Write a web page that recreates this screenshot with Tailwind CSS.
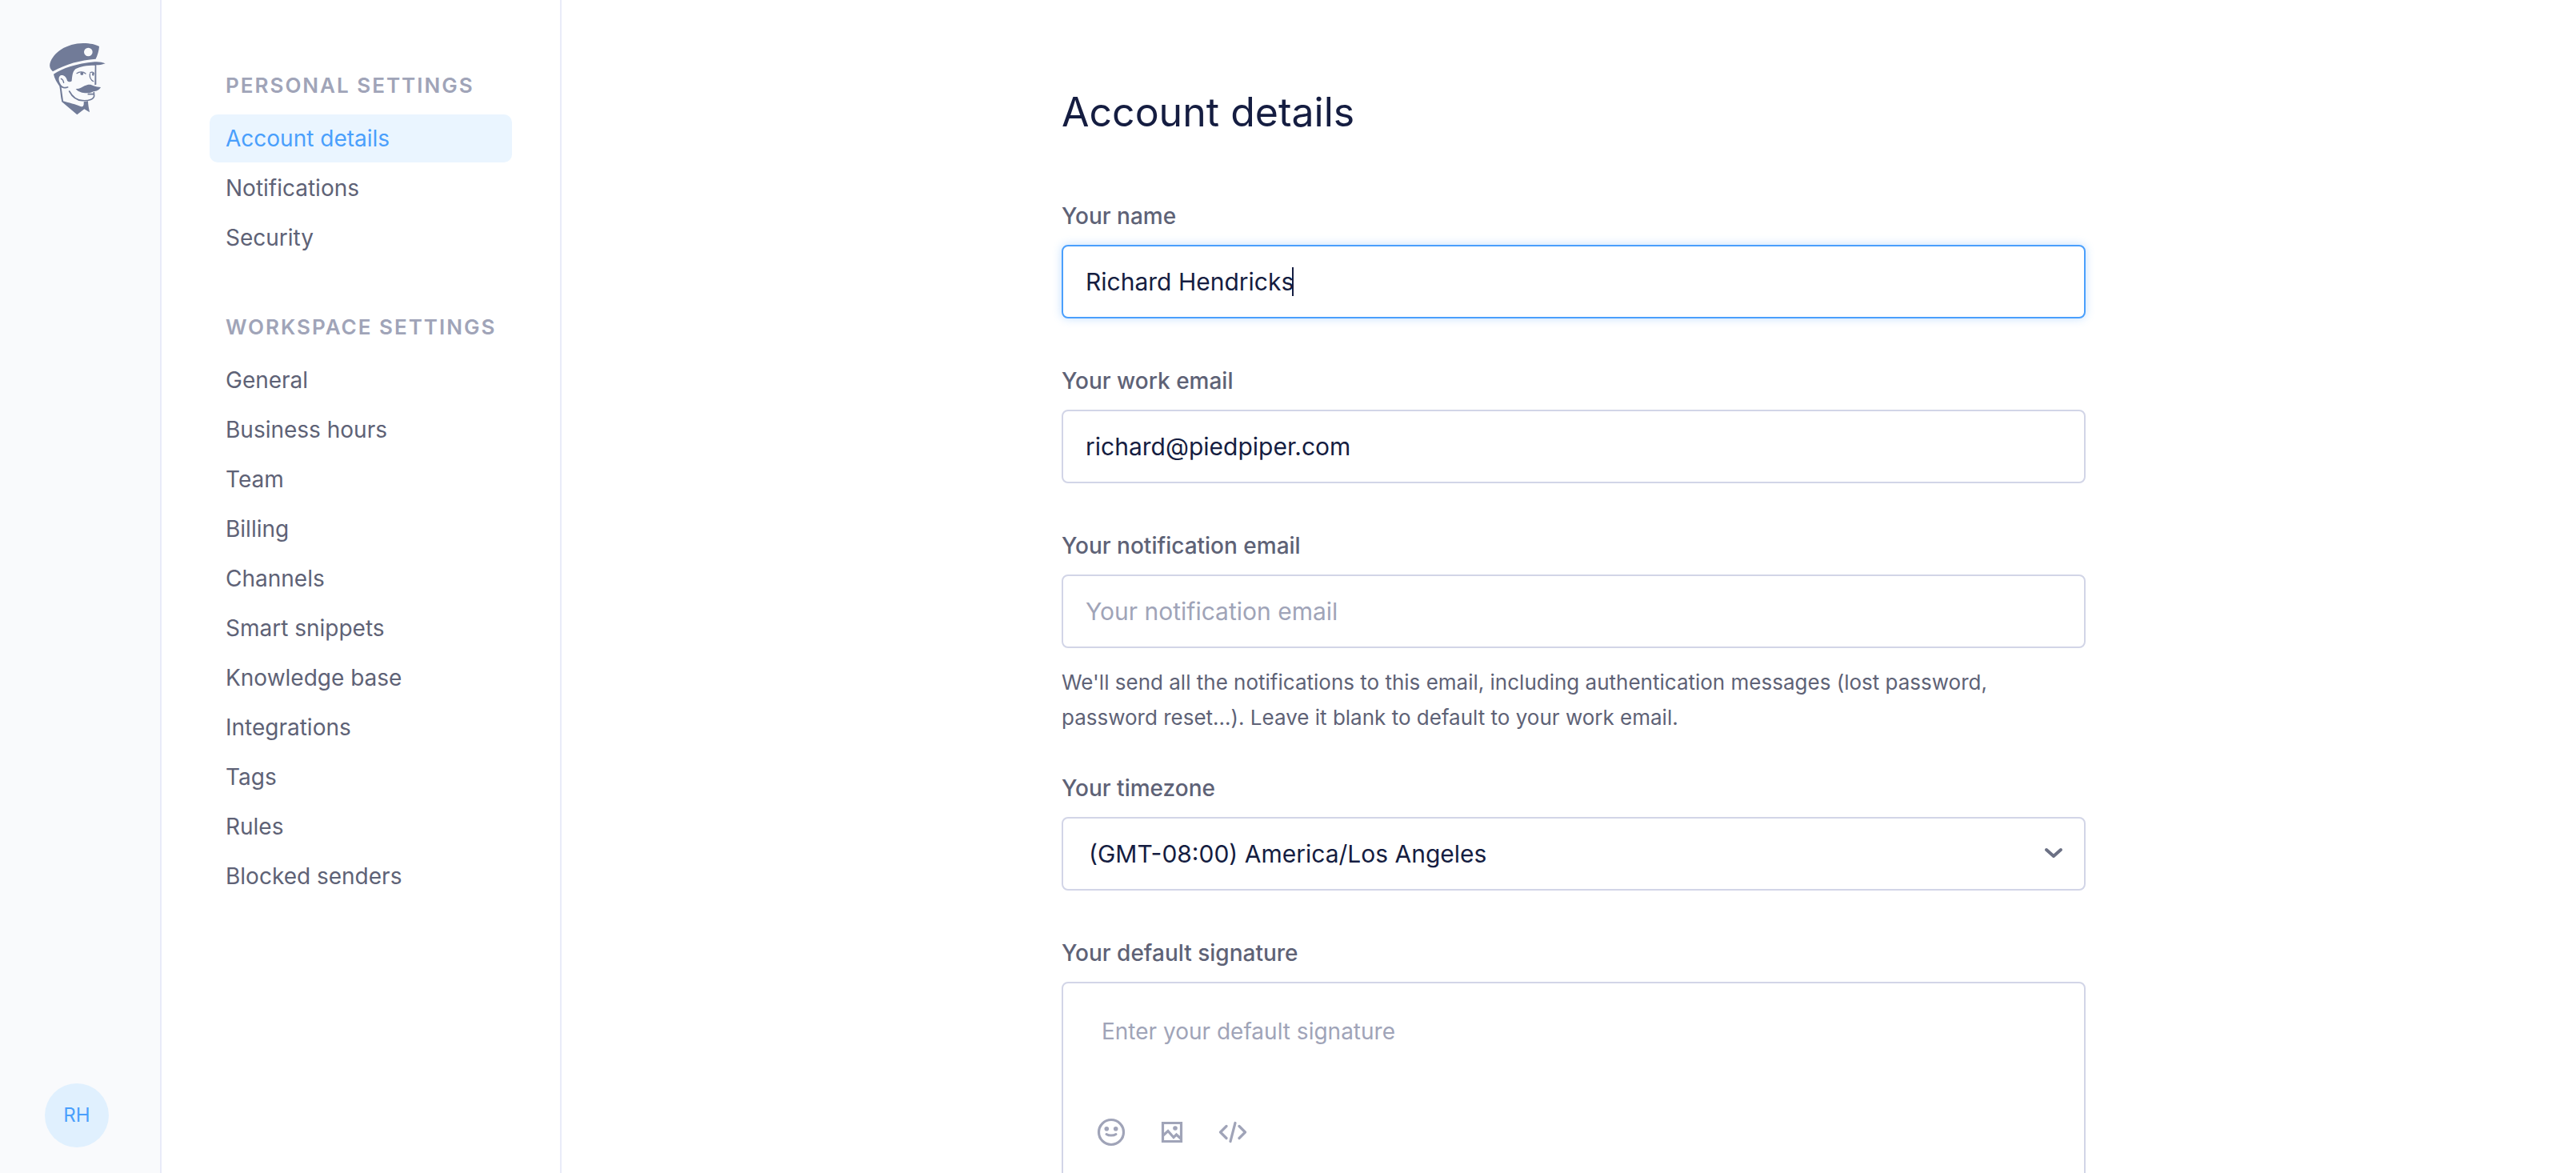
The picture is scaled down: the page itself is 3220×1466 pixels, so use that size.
<!DOCTYPE html>
<html lang="en">
<head>
<meta charset="utf-8">
<meta name="viewport" content="width=device-width, initial-scale=1">
<title>Account details</title>
<script src="https://cdn.jsdelivr.net/npm/@tailwindcss/browser@4"></script>
</head>
<body class="flex h-screen overflow-hidden bg-white font-[Inter,sans-serif] text-[28px] leading-10 text-[#5e6276]">

<aside class="flex w-[202px] shrink-0 flex-col items-center justify-between border-r-2 border-[#e9ebf8] bg-[#f9fafc] pt-[54px] pr-2 pb-8">
  <a href="#" aria-label="Home">
    <svg class="h-[90px] w-[72px]" viewBox="60 42 216 270" fill="#717b98">
      <!-- beret -->
      <path fill-rule="evenodd" d="M78 148C68 139 65 129 67 119C80 75 130 43 192 42C218 42 240 47 252 54C251 70 246 87 239 101C180 106 128 119 78 148ZM195 75a16 16 0 1 0 32 0a16 16 0 1 0-32 0Z"/>
      <!-- brim, hair and sideburn -->
      <path d="M81 158C115 136 165 119 235 112C250 111 264 113 275 118C262 123 252 124 241 124L241 197L235 199L236 125C205 125 180 129 163 139C151 150 151 167 149 184C144 189 136 187 132 182C128 168 119 160 107 163C97 169 100 185 108 197C115 207 124 208 135 204L137 208C128 213 119 213 110 208L117 258L112 262C107 242 107 223 103 203C94 189 84 175 81 158Z"/>
      <!-- collar -->
      <path d="M112 257C138 266 165 270 184 280C193 281 195 275 194 262L210 259C210 272 213 285 216 301L196 289L169 310L112 262Z"/>
      <!-- ear, eyes, nose, jaw and mouth -->
      <g fill="none" stroke="#717b98" stroke-linecap="round" stroke-linejoin="round">
        <path stroke-width="4" d="M109 175C117 178 118 184 119 190"/>
        <path stroke-width="4" d="M168 155C177 148 192 148 201 156M218 153C223 149 229 149 232 155M217 158C216 170 222 181 230 185"/>
        <path stroke-width="5" d="M140 222C150 241 163 256 189 257C214 259 232 251 233 240L232 226M211 233H229"/>
      </g>
      <circle cx="187" cy="156" r="6"/>
      <ellipse cx="229" cy="158" rx="4" ry="6"/>
      <!-- moustache -->
      <path d="M164 213C178 214 187 208 197 202C210 195 222 196 231 202C240 206 249 207 258 207C252 218 242 222 231 222C218 233 178 232 164 213Z"/>
    </svg>
  </a>
  <button type="button" class="size-20 rounded-full bg-[#e0f0fe] text-2xl text-[#4a9ffc]">RH</button>
</aside>

<nav class="flex w-[500px] shrink-0 flex-col gap-[62px] border-r-2 border-[#e9ebf8] px-[60px] pt-[87px]" aria-label="Settings">
  <section>
    <h2 class="mb-4 pl-5 text-[26px] font-semibold tracking-[2px] whitespace-nowrap text-[#a0a4b8]">PERSONAL SETTINGS</h2>
    <ul class="flex flex-col gap-0.5">
      <li><a href="#" aria-current="page" class="block rounded-[10px] bg-[#eaf5ff] px-5 py-2.5 text-[#4a9ffc]">Account details</a></li>
      <li><a href="#" class="block px-5 py-2.5">Notifications</a></li>
      <li><a href="#" class="block px-5 py-2.5">Security</a></li>
    </ul>
  </section>
  <section>
    <h2 class="mb-4 pl-5 text-[26px] font-semibold tracking-[2px] whitespace-nowrap text-[#a0a4b8]">WORKSPACE SETTINGS</h2>
    <ul class="flex flex-col gap-0.5">
      <li><a href="#" class="block px-5 py-2.5">General</a></li>
      <li><a href="#" class="block px-5 py-2.5">Business hours</a></li>
      <li><a href="#" class="block px-5 py-2.5">Team</a></li>
      <li><a href="#" class="block px-5 py-2.5">Billing</a></li>
      <li><a href="#" class="block px-5 py-2.5">Channels</a></li>
      <li><a href="#" class="block px-5 py-2.5">Smart snippets</a></li>
      <li><a href="#" class="block px-5 py-2.5">Knowledge base</a></li>
      <li><a href="#" class="block px-5 py-2.5">Integrations</a></li>
      <li><a href="#" class="block px-5 py-2.5">Tags</a></li>
      <li><a href="#" class="block px-5 py-2.5">Rules</a></li>
      <li><a href="#" class="block px-5 py-2.5">Blocked senders</a></li>
    </ul>
  </section>
</nav>

<main class="min-w-0 flex-1 overflow-hidden pt-[108px] pl-3">
  <form class="mx-auto max-w-[1280px]">
    <h1 class="mb-[78px] text-[50px] leading-16 text-[#151d41]">Account details</h1>

    <div class="mb-[58px]">
      <label for="name" class="mb-4 block font-medium">Your name</label>
      <div class="relative">
        <input id="name" type="text" value="Richard Hendricks" class="block h-[92px] w-full rounded-lg border-2 border-[#4a9ffc] bg-white px-7 text-[30px] text-[#151d41] shadow-[0_0_12px_#4a9ffc55] outline-none">
        <span class="absolute top-7 left-[288px] h-9 w-0.5 bg-[#151d41]"></span>
      </div>
    </div>

    <div class="mb-[58px]">
      <label for="email" class="mb-4 block font-medium">Your work email</label>
      <input id="email" type="email" value="richard@piedpiper.com" class="block h-[92px] w-full rounded-lg border-2 border-[#d2d5e7] bg-white px-7 text-[30px] text-[#151d41]">
    </div>

    <div class="mb-[46px]">
      <label for="notify" class="mb-4 block font-medium">Your notification email</label>
      <input id="notify" type="email" placeholder="Your notification email" class="block h-[92px] w-full rounded-lg border-2 border-[#d2d5e7] bg-white px-7 text-[30px] text-[#151d41] placeholder:text-[#a0a4b8]">
      <p class="mt-[21px] text-[26px] leading-11">We'll send all the notifications to this email, including authentication messages (lost password, password reset...). Leave it blank to default to your work email.</p>
    </div>

    <div class="mb-[58px]">
      <label for="timezone" class="mb-4 block font-medium">Your timezone</label>
      <div class="relative">
        <select id="timezone" class="block h-[92px] w-full appearance-none rounded-lg border-2 border-[#d2d5e7] bg-white px-8 text-[30px] text-[#151d41]">
          <option>(GMT-08:00) America/Los Angeles</option>
        </select>
        <svg class="pointer-events-none absolute top-[37px] right-7 h-4 w-6" viewBox="0 0 24 16" fill="none" stroke="#6b7084" stroke-width="4" stroke-linecap="round" stroke-linejoin="round"><path d="M3 4L12 12L21 4"/></svg>
      </div>
    </div>

    <div>
      <label for="signature" class="mb-4 block font-medium">Your default signature</label>
      <div class="rounded-lg border-2 border-[#d2d5e7] px-10 pt-10 pb-10">
        <textarea id="signature" placeholder="Enter your default signature" class="block h-[126px] w-full resize-none px-2 outline-none placeholder:text-[#a0a4b8]"></textarea>
        <div class="flex gap-9 text-[#a0a4b8]">
          <button type="button" aria-label="Insert emoji">
            <svg class="size-10" viewBox="0 0 40 40" fill="none" stroke="currentColor" stroke-width="3.2"><circle cx="20" cy="20" r="15.500"/><path stroke-width="3" stroke-linecap="round" d="M14 22.500C17 24.600 23 24.600 26 22.500"/><circle cx="14.300" cy="15.800" r="2.800" fill="currentColor" stroke="none"/><circle cx="25.700" cy="15.800" r="2.800" fill="currentColor" stroke="none"/></svg>
          </button>
          <button type="button" aria-label="Insert image">
            <svg class="size-10" viewBox="0 0 40 40" fill="none" stroke="currentColor" stroke-width="3.2"><path d="M8.500 8.500H31.500V31.500H8.500ZM9 24L15 18.500L22 26.500L25.500 23L31 28"/><circle cx="24" cy="15" r="2.800" fill="currentColor" stroke="none"/></svg>
          </button>
          <button type="button" aria-label="Insert code">
            <svg class="size-10" viewBox="0 0 40 40" fill="none" stroke="currentColor" stroke-width="3.2" stroke-linecap="round" stroke-linejoin="round"><path d="M12 12.500L4.500 20L12 27.500M28 12.500L35.500 20L28 27.500M23 8.500L17 31.500"/></svg>
          </button>
        </div>
      </div>
    </div>
  </form>
</main>
</body>
</html>
